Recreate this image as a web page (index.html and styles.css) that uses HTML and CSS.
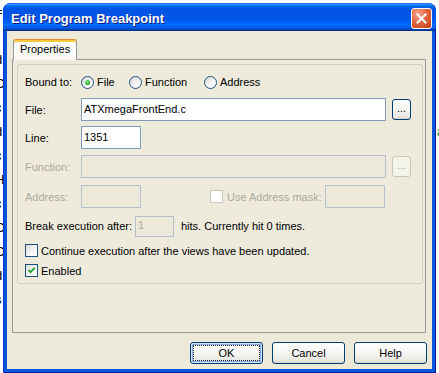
FILE: index.html
```html
<!DOCTYPE html>
<html lang="en">
<head>
    <meta charset="UTF-8">
    <meta name="viewport" content="width=device-width, initial-scale=1.0">
    <title>Edit Program Breakpoint</title>
    <link rel="stylesheet" href="styles.css">
</head>
<body>
    <!-- the editor page behind the dialog, only its edges show -->
    <div class="backdrop">
        <div class="bd-line"><span>=</span><span></span></div>
        <div class="bd-line"><span>t</span><span></span></div>
        <div class="bd-line"><span>d</span><span></span></div>
        <div class="bd-line"><span>O</span><span></span></div>
        <div class="bd-line"><span>c</span><span></span></div>
        <div class="bd-line"><span>d</span><span class="bd-green">a</span></div>
        <div class="bd-line"><span>c</span><span class="bd-blue">r</span></div>
        <div class="bd-line"><span>H</span><span></span></div>
        <div class="bd-line"><span>c</span><span></span></div>
        <div class="bd-line"><span>O</span><span></span></div>
        <div class="bd-line"><span>O</span><span></span></div>
        <div class="bd-line"><span>d</span><span></span></div>
        <div class="bd-line"><span>s</span><span></span></div>
    </div>

    <div class="window">
        <div class="titlebar">
            <span class="title">Edit Program Breakpoint</span>
            <button class="close" type="button">
                <svg width="11" height="11" viewBox="0 0 11 11">
                    <path d="M1.5 1.5 L9.5 9.5 M9.5 1.5 L1.5 9.5" stroke="#fff" stroke-width="2" stroke-linecap="square"/>
                </svg>
            </button>
        </div>

        <div class="client">
            <div class="tabstrip">
                <div class="tab">Properties</div>
            </div>

            <div class="panel">
                <div class="group">
                    <div class="row row-bound">
                        <span class="label">Bound to:</span>
                        <label class="opt opt-file"><span class="radio checked"><span class="dot"></span></span>File</label>
                        <label class="opt opt-func"><span class="radio"></span>Function</label>
                        <label class="opt"><span class="radio"></span>Address</label>
                    </div>

                    <div class="row row-file">
                        <span class="label">File:</span>
                        <input class="field field-wide" type="text" value="ATXmegaFrontEnd.c">
                        <button class="browse" type="button">...</button>
                    </div>

                    <div class="row row-line">
                        <span class="label">Line:</span>
                        <input class="field field-short" type="text" value="1351">
                    </div>

                    <div class="row row-func">
                        <span class="label disabled">Function:</span>
                        <input class="field field-wide" type="text" disabled>
                        <button class="browse" type="button" disabled>...</button>
                    </div>

                    <div class="row row-addr">
                        <span class="label disabled">Address:</span>
                        <input class="field field-short" type="text" disabled>
                        <label class="opt mask disabled"><span class="check off"></span>Use Address mask:</label>
                        <input class="field field-short mask-field" type="text" disabled>
                    </div>

                    <div class="row row-break">
                        <span class="label label-long">Break execution after:</span>
                        <input class="field field-hits" type="text" value="1" disabled>
                        <span class="hits">hits. Currently hit 0 times.</span>
                    </div>

                    <div class="row row-check">
                        <label class="opt"><span class="check"></span>Continue execution after the views have been updated.</label>
                    </div>

                    <div class="row row-check">
                        <label class="opt">
                            <span class="check">
                                <svg width="11" height="11" viewBox="0 0 11 11">
                                    <path d="M2.5 5 L4.5 7.2 L8.7 2.8" fill="none" stroke="#21a121" stroke-width="1.8"/>
                                </svg>
                            </span>Enabled
                        </label>
                    </div>
                </div>
            </div>

            <div class="actions">
                <button class="btn btn-default" type="button">OK</button>
                <button class="btn" type="button">Cancel</button>
                <button class="btn" type="button">Help</button>
            </div>
        </div>
    </div>
</body>
</html>
```

FILE: styles.css
```css
body {
    margin: 0;
    width: 439px;
    height: 373px;
    overflow: hidden;
    position: relative;
    background: #fff;
    font-family: "Liberation Sans", Arial, sans-serif;
    font-size: 11px;
    color: #000;
}

/* page behind the dialog */
.backdrop {
    font-size: 13px;
    line-height: 24px;
    padding-top: 0;
}
.bd-line {
    display: flex;
    justify-content: space-between;
    height: 24px;
}
.bd-line span:first-child {
    margin-left: -5px;
}
.bd-line span:last-child {
    margin-right: -5px;
}
.bd-green {
    color: #0a8a2a;
}
.bd-blue {
    color: #1a3cc8;
}

/* dialog frame */
.window {
    position: absolute;
    left: 3px;
    top: 3px;
    width: 433px;
    height: 370px;
    box-sizing: border-box;
    padding: 0 4px 4px 4px;
    display: flex;
    flex-direction: column;
    background: #0855dd;
    border-radius: 8px 8px 0 0;
    box-shadow: inset 1px 0 #0831d9, inset -1px 0 #001ea0, inset 0 -1px #001ea0;
}
.titlebar {
    height: 28px;
    margin: 0 -4px;
    padding: 2px 4px 0 8px;
    box-sizing: border-box;
    display: flex;
    align-items: center;
    justify-content: space-between;
    border-radius: 8px 8px 0 0;
    background: linear-gradient(180deg, #0058ee 0%, #3a93ff 4%, #288eff 6%, #127dff 8%, #036ffc 10%, #0262ee 14%, #0057e5 20%, #0054e3 24%, #0055eb 56%, #005bf5 66%, #026afe 76%, #0062ef 86%, #0052d6 92%, #0040ab 94%, #003092 100%);
}
.title {
    color: #fff;
    font-weight: bold;
    font-size: 13px;
    text-shadow: 1px 1px #0a1883;
}
.close {
    width: 21px;
    height: 21px;
    padding: 0;
    border: 1px solid #fff;
    border-radius: 3px;
    display: flex;
    align-items: center;
    justify-content: center;
    background: radial-gradient(circle at 30% 25%, #f3a58a 0%, #e2673f 45%, #c43c17 100%);
}

.client {
    flex: 1;
    display: flex;
    flex-direction: column;
    background: #ece9d8;
}

/* tab */
.tabstrip {
    display: flex;
    padding: 8px 0 0 6px;
}
.tab {
    position: relative;
    z-index: 1;
    width: 64px;
    height: 21px;
    margin-bottom: -1px;
    box-sizing: border-box;
    padding: 3px 0 0 6px;
    border: 1px solid #919b9c;
    border-bottom: none;
    border-top: 1px solid #e68b2c;
    border-radius: 3px 3px 0 0;
    box-shadow: inset 0 2px #ffc83c;
    background: linear-gradient(#fff, #f9f8f4);
}
.panel {
    height: 274px;
    margin: 0 6px 0 5px;
    box-sizing: border-box;
    padding: 4px 2px 0 4px;
    border: 1px solid #919b9c;
    background: #eeebdd;
}
.group {
    height: 220px;
    box-sizing: border-box;
    padding: 10px 11px 0 7px;
    border: 1px solid #d0d0bf;
    border-radius: 3px;
}

/* rows */
.row {
    display: flex;
    align-items: center;
    height: 23px;
    margin-top: 6px;
}
.row-bound {
    height: 14px;
    margin-top: 0;
}
.row-file {
    margin-top: 9px;
}
.row-line {
    margin-top: 5px;
}
.row-addr {
    margin-top: 7px;
}
.row-break {
    height: 22px;
    margin-top: 7px;
}
.row-check {
    height: 13px;
    margin-top: 7px;
}
.label {
    width: 56px;
    flex: none;
}
.label-long {
    width: 110px;
}
.disabled {
    color: #aca899;
}

.field {
    height: 23px;
    box-sizing: border-box;
    padding: 0 2px 2px;
    border: 1px solid #7f9db9;
    background: #fff;
    font-family: "Liberation Sans", Arial, sans-serif;
    font-size: 11px;
    color: #000;
    outline: none;
}
.field:disabled {
    background: #ece9d8;
    border-color: #b3c0ce;
    color: #aca899;
}
.field-wide {
    width: 305px;
}
.field-short {
    width: 60px;
}
.field-hits {
    width: 39px;
    height: 21px;
}
.hits {
    margin-left: 7px;
}
.mask {
    margin-left: 69px;
}
.mask-field {
    margin-left: auto;
    margin-right: 26px;
}

.browse {
    width: 19px;
    height: 21px;
    margin-left: 6px;
    padding: 0 0 4px;
    border: 1px solid #003c74;
    border-radius: 3px;
    background: linear-gradient(#fff, #f3f3ef 60%, #e6e5de 90%, #d6d0c5);
    font-family: "Liberation Sans", Arial, sans-serif;
    font-size: 11px;
    color: #000;
}
.browse:disabled {
    border-color: #c9c7ba;
    background: #f5f4ea;
    color: #aca899;
}

/* radios and checkboxes */
.opt {
    display: flex;
    align-items: center;
    gap: 3px;
}
.opt-file {
    width: 48px;
}
.opt-func {
    width: 75px;
}
.opt.mask {
    gap: 4px;
}
.radio {
    width: 13px;
    height: 13px;
    box-sizing: border-box;
    border: 1px solid #1c5180;
    border-radius: 50%;
    display: flex;
    align-items: center;
    justify-content: center;
    background: linear-gradient(135deg, #dcdcd7, #fff 85%);
}
.dot {
    width: 5px;
    height: 5px;
    border-radius: 50%;
    background: radial-gradient(circle at 40% 35%, #8ee88b, #21a121 70%);
}
.check {
    width: 13px;
    height: 13px;
    flex: none;
    box-sizing: border-box;
    border: 1px solid #1c5180;
    display: flex;
    background: linear-gradient(135deg, #dcdcd7, #fff 85%);
}
.check.off {
    border-color: #cac8bb;
    background: #fff;
}

/* bottom buttons */
.actions {
    display: flex;
    justify-content: flex-end;
    gap: 9px;
    padding: 9px 5px 0 0;
}
.btn {
    position: relative;
    width: 73px;
    height: 22px;
    padding: 0;
    border: 1px solid #003c74;
    border-radius: 3px;
    background: linear-gradient(#fff, #f3f3ef 60%, #e6e5de 90%, #d6d0c5);
    font-family: "Liberation Sans", Arial, sans-serif;
    font-size: 11px;
    color: #000;
}
.btn-default {
    box-shadow: inset 0 0 0 1px #cee7ff, inset 0 0 0 2px #89ade4;
}
.btn-default::after {
    content: "";
    position: absolute;
    inset: 2px;
    border: 1px dotted #222;
}
```
